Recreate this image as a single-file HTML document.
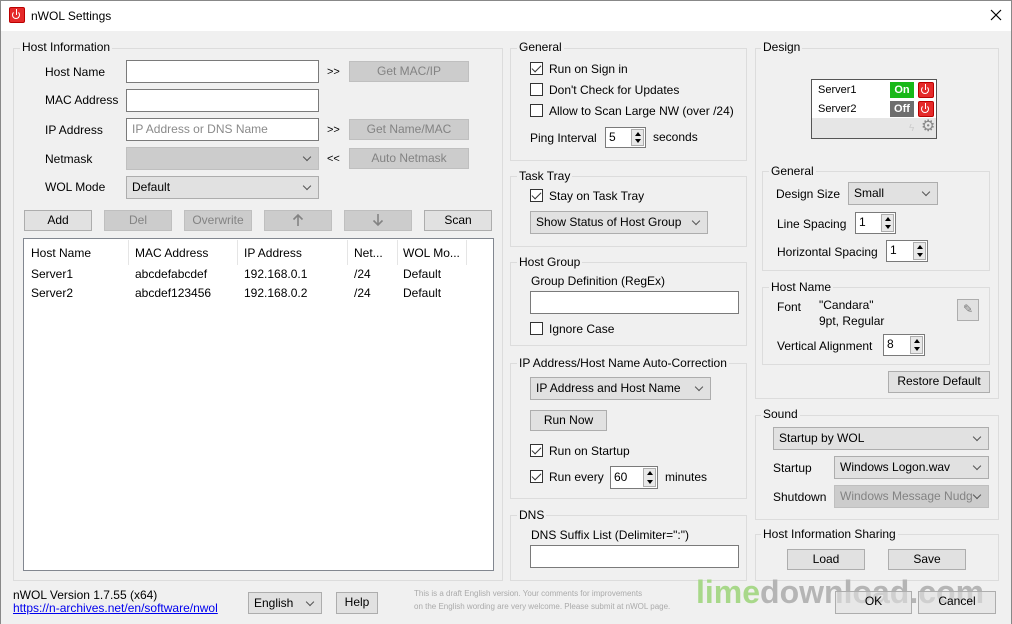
<!DOCTYPE html>
<html><head><meta charset="utf-8"><style>
*{box-sizing:border-box;margin:0;padding:0}
body{width:1012px;height:624px;background:#f0f0f0;font-family:"Liberation Sans",sans-serif;font-size:12px;color:#000;position:relative;overflow:hidden}
.a{position:absolute;white-space:nowrap}
.t{position:absolute;white-space:nowrap;line-height:14px}
.gb{position:absolute;border:1px solid #dcdcdc}
.gl{position:absolute;background:#f0f0f0;padding:0 2px;line-height:14px;white-space:nowrap}
.in{position:absolute;background:#fff;border:1px solid #7a7a7a;padding-left:5px;line-height:20px}
.btn{position:absolute;background:#e1e1e1;border:1px solid #adadad;text-align:center;line-height:18px}
.dis{background:#cccccc;border-color:#bfbfbf;color:#838383}
.cb{position:absolute;background:#e1e1e1;border:1px solid #adadad;padding-left:5px;line-height:20px}
.cb:after{content:"";position:absolute;right:8px;top:6px;width:5px;height:5px;border-right:1px solid #555;border-bottom:1px solid #555;transform:rotate(45deg)}
.cb.dd{background:#cccccc;border-color:#bfbfbf;color:#838383}
.chk{position:absolute;width:13px;height:13px;border:1px solid #333;background:#fff}
.chk.on:after{content:"";position:absolute;left:3px;top:0px;width:4px;height:8px;border-right:1px solid #333;border-bottom:1px solid #333;transform:rotate(45deg)}
.sp{position:absolute;background:#fff;border:1px solid #7a7a7a;padding-left:3px;line-height:18px}
.sp i{position:absolute;right:1px;top:1px;bottom:1px;width:13px;background:#e8e8e8;border:1px solid #adadad}
.sp i:before{content:"";position:absolute;left:3px;top:2px;border:3px solid transparent;border-bottom:4px solid #000;border-top:0}
.sp i:after{content:"";position:absolute;left:3px;bottom:2px;border:3px solid transparent;border-top:4px solid #000;border-bottom:0}
.pw{position:absolute;width:14px;height:14px;background:#e52a2a;border:1px solid #b00;border-radius:2px}
.pw:before{content:"";position:absolute;left:2px;top:3px;width:6px;height:6px;border:1.5px solid #fff;border-top-color:transparent;border-radius:50%}
.pw:after{content:"";position:absolute;left:5.5px;top:1px;width:1.5px;height:6px;background:#fff}
</style></head><body>
<!-- title bar -->
<div class="a" style="left:0;top:0;width:1012px;height:31px;background:#fff;border:1px solid #888;border-bottom:none"></div>
<div class="pw" style="left:9px;top:7px;width:16px;height:16px"></div>
<div class="t" style="left:31px;top:9px;font-size:12px">nWOL Settings</div>
<svg class="a" style="left:990px;top:9px" width="12" height="12"><path d="M1 1L11 11M11 1L1 11" stroke="#000" stroke-width="1.2"/></svg>
<div class="a" style="left:0;top:31px;width:1px;height:593px;background:#888"></div>
<div class="a" style="left:1011px;top:31px;width:1px;height:593px;background:#888"></div>

<!-- Host Information -->
<div class="gb" style="left:13px;top:48px;width:490px;height:533px"></div>
<div class="gl" style="left:20px;top:40px">Host Information</div>
<div class="t" style="left:45px;top:65px">Host Name</div>
<div class="t" style="left:45px;top:93px">MAC Address</div>
<div class="t" style="left:45px;top:123px">IP Address</div>
<div class="t" style="left:45px;top:152px">Netmask</div>
<div class="t" style="left:45px;top:180px">WOL Mode</div>
<div class="in" style="left:126px;top:60px;width:193px;height:23px"></div>
<div class="in" style="left:126px;top:89px;width:193px;height:23px"></div>
<div class="in" style="left:126px;top:118px;width:193px;height:23px;color:#8a8a8a">IP Address or DNS Name</div>
<div class="cb dd" style="left:126px;top:147px;width:193px;height:23px"></div>
<div class="cb" style="left:126px;top:176px;width:193px;height:23px">Default</div>
<div class="t" style="left:327px;top:65px;font-size:11px">&gt;&gt;</div>
<div class="t" style="left:327px;top:123px;font-size:11px">&gt;&gt;</div>
<div class="t" style="left:327px;top:152px;font-size:11px">&lt;&lt;</div>
<div class="btn dis" style="left:349px;top:61px;width:120px;height:21px">Get MAC/IP</div>
<div class="btn dis" style="left:349px;top:119px;width:120px;height:21px">Get Name/MAC</div>
<div class="btn dis" style="left:349px;top:148px;width:120px;height:21px">Auto Netmask</div>
<div class="btn" style="left:24px;top:210px;width:68px;height:21px">Add</div>
<div class="btn dis" style="left:104px;top:210px;width:68px;height:21px">Del</div>
<div class="btn dis" style="left:184px;top:210px;width:68px;height:21px">Overwrite</div>
<div class="btn dis" style="left:264px;top:210px;width:68px;height:21px"><svg width="12" height="14" style="margin-top:2px"><path d="M6 13V2M1.5 6.5L6 2L10.5 6.5" stroke="#838383" stroke-width="1.6" fill="none"/></svg></div>
<div class="btn dis" style="left:344px;top:210px;width:68px;height:21px"><svg width="12" height="14" style="margin-top:2px"><path d="M6 1V12M1.5 7.5L6 12L10.5 7.5" stroke="#838383" stroke-width="1.6" fill="none"/></svg></div>
<div class="btn" style="left:424px;top:210px;width:68px;height:21px">Scan</div>
<div class="a" style="left:23px;top:238px;width:471px;height:333px;background:#fff;border:1px solid #828790"></div>
<div class="a" style="left:128px;top:240px;width:1px;height:25px;background:#e5e5e5"></div>
<div class="a" style="left:237px;top:240px;width:1px;height:25px;background:#e5e5e5"></div>
<div class="a" style="left:347px;top:240px;width:1px;height:25px;background:#e5e5e5"></div>
<div class="a" style="left:397px;top:240px;width:1px;height:25px;background:#e5e5e5"></div>
<div class="a" style="left:466px;top:240px;width:1px;height:25px;background:#e5e5e5"></div>
<div class="t" style="left:31px;top:246px">Host Name</div>
<div class="t" style="left:135px;top:246px">MAC Address</div>
<div class="t" style="left:244px;top:246px">IP Address</div>
<div class="t" style="left:354px;top:246px">Net...</div>
<div class="t" style="left:403px;top:246px">WOL Mo...</div>
<div class="t" style="left:31px;top:267px">Server1</div>
<div class="t" style="left:135px;top:267px">abcdefabcdef</div>
<div class="t" style="left:244px;top:267px">192.168.0.1</div>
<div class="t" style="left:354px;top:267px">/24</div>
<div class="t" style="left:403px;top:267px">Default</div>
<div class="t" style="left:31px;top:286px">Server2</div>
<div class="t" style="left:135px;top:286px">abcdef123456</div>
<div class="t" style="left:244px;top:286px">192.168.0.2</div>
<div class="t" style="left:354px;top:286px">/24</div>
<div class="t" style="left:403px;top:286px">Default</div>

<!-- General -->
<div class="gb" style="left:510px;top:48px;width:237px;height:113px"></div>
<div class="gl" style="left:517px;top:40px">General</div>
<div class="chk on" style="left:530px;top:62px"></div><div class="t" style="left:549px;top:62px">Run on Sign in</div>
<div class="chk" style="left:530px;top:83px"></div><div class="t" style="left:549px;top:83px">Don't Check for Updates</div>
<div class="chk" style="left:530px;top:104px"></div><div class="t" style="left:549px;top:104px">Allow to Scan Large NW (over /24)</div>
<div class="t" style="left:530px;top:131px">Ping Interval</div>
<div class="sp" style="left:605px;top:127px;width:41px;height:21px">5<i></i></div>
<div class="t" style="left:653px;top:130px">seconds</div>

<!-- Task Tray -->
<div class="gb" style="left:510px;top:176px;width:237px;height:71px"></div>
<div class="gl" style="left:517px;top:169px">Task Tray</div>
<div class="chk on" style="left:530px;top:189px"></div><div class="t" style="left:549px;top:189px">Stay on Task Tray</div>
<div class="cb" style="left:530px;top:211px;width:178px;height:23px">Show Status of Host Group</div>

<!-- Host Group -->
<div class="gb" style="left:510px;top:262px;width:237px;height:84px"></div>
<div class="gl" style="left:517px;top:255px">Host Group</div>
<div class="t" style="left:531px;top:274px">Group Definition (RegEx)</div>
<div class="in" style="left:530px;top:291px;width:209px;height:23px"></div>
<div class="chk" style="left:530px;top:322px"></div><div class="t" style="left:549px;top:322px">Ignore Case</div>

<!-- IP auto -->
<div class="gb" style="left:510px;top:363px;width:237px;height:136px"></div>
<div class="gl" style="left:517px;top:356px">IP Address/Host Name Auto-Correction</div>
<div class="cb" style="left:530px;top:377px;width:181px;height:23px">IP Address and Host Name</div>
<div class="btn" style="left:530px;top:410px;width:77px;height:21px">Run Now</div>
<div class="chk on" style="left:530px;top:444px"></div><div class="t" style="left:549px;top:444px">Run on Startup</div>
<div class="chk on" style="left:530px;top:470px"></div><div class="t" style="left:549px;top:470px">Run every</div>
<div class="sp" style="left:610px;top:466px;width:48px;height:23px;line-height:20px">60<i></i></div>
<div class="t" style="left:665px;top:470px">minutes</div>

<!-- DNS -->
<div class="gb" style="left:510px;top:515px;width:237px;height:66px"></div>
<div class="gl" style="left:517px;top:508px">DNS</div>
<div class="t" style="left:531px;top:528px">DNS Suffix List (Delimiter=":")</div>
<div class="in" style="left:530px;top:545px;width:209px;height:23px"></div>

<!-- Design -->
<div class="gb" style="left:755px;top:48px;width:244px;height:351px"></div>
<div class="gl" style="left:761px;top:40px">Design</div>
<div class="a" style="left:811px;top:79px;width:126px;height:60px;background:#fff;border:1px solid #555"></div>
<div class="a" style="left:812px;top:118px;width:124px;height:20px;background:#e6e6e6"></div>
<div class="t" style="left:818px;top:83px;font-size:11px">Server1</div>
<div class="t" style="left:818px;top:102px;font-size:11px">Server2</div>
<div class="a" style="left:890px;top:82px;width:24px;height:16px;background:#18b818;color:#fff;font-weight:bold;font-size:11px;text-align:center;line-height:16px">On</div>
<div class="a" style="left:890px;top:101px;width:24px;height:16px;background:#6e6e6e;color:#fff;font-weight:bold;font-size:11px;text-align:center;line-height:16px">Off</div>
<div class="pw" style="left:918px;top:82px;width:16px;height:16px"></div>
<div class="pw" style="left:918px;top:101px;width:16px;height:16px"></div>
<div class="t" style="left:909px;top:122px;color:#ccc;font-size:10px">ϟ</div>
<div class="t" style="left:921px;top:119px;color:#888;font-size:16px;line-height:16px">⚙</div>

<div class="gb" style="left:762px;top:171px;width:228px;height:100px"></div>
<div class="gl" style="left:769px;top:164px">General</div>
<div class="t" style="left:776px;top:187px">Design Size</div>
<div class="cb" style="left:848px;top:182px;width:90px;height:23px">Small</div>
<div class="t" style="left:777px;top:217px">Line Spacing</div>
<div class="sp" style="left:855px;top:212px;width:41px;height:22px">1<i></i></div>
<div class="t" style="left:777px;top:245px">Horizontal Spacing</div>
<div class="sp" style="left:886px;top:240px;width:42px;height:22px">1<i></i></div>

<div class="gb" style="left:762px;top:287px;width:228px;height:78px"></div>
<div class="gl" style="left:769px;top:280px">Host Name</div>
<div class="t" style="left:777px;top:300px">Font</div>
<div class="t" style="left:819px;top:298px">"Candara"</div>
<div class="t" style="left:819px;top:314px">9pt, Regular</div>
<div class="btn" style="left:957px;top:299px;width:22px;height:22px;color:#777">✎</div>
<div class="t" style="left:777px;top:339px">Vertical Alignment</div>
<div class="sp" style="left:883px;top:334px;width:42px;height:22px">8<i></i></div>
<div class="btn" style="left:888px;top:371px;width:102px;height:22px">Restore Default</div>

<!-- Sound -->
<div class="gb" style="left:755px;top:415px;width:244px;height:105px"></div>
<div class="gl" style="left:761px;top:407px">Sound</div>
<div class="cb" style="left:773px;top:427px;width:216px;height:23px">Startup by WOL</div>
<div class="t" style="left:773px;top:461px">Startup</div>
<div class="cb" style="left:834px;top:456px;width:155px;height:23px">Windows Logon.wav</div>
<div class="t" style="left:773px;top:490px">Shutdown</div>
<div class="cb dd" style="left:834px;top:485px;width:155px;height:23px;overflow:hidden">Windows Message Nudg</div>

<!-- Sharing -->
<div class="gb" style="left:755px;top:534px;width:244px;height:47px"></div>
<div class="gl" style="left:761px;top:527px">Host Information Sharing</div>
<div class="btn" style="left:787px;top:549px;width:78px;height:21px">Load</div>
<div class="btn" style="left:888px;top:549px;width:78px;height:21px">Save</div>

<!-- bottom -->
<div class="t" style="left:13px;top:588px">nWOL Version 1.7.55 (x64)</div>
<div class="t" style="left:13px;top:601px;color:#0000ee;text-decoration:underline">https://n-archives.net/en/software/nwol</div>
<div class="cb" style="left:248px;top:592px;width:74px;height:22px">English</div>
<div class="btn" style="left:336px;top:592px;width:42px;height:22px">Help</div>
<div class="t" style="left:414px;top:588px;font-size:8px;color:#aaa;line-height:12px">This is a draft English version. Your comments for improvements</div>
<div class="t" style="left:414px;top:601px;font-size:8px;color:#aaa;line-height:12px">on the English wording are very welcome. Please submit at nWOL page.</div>
<div class="t" style="left:696px;top:572px;font-size:32px;line-height:40px;font-weight:bold"><span style="color:#a8d88a">lime</span><span style="color:#b5b5b5">download.com</span></div>
<div class="btn" style="left:835px;top:591px;width:77px;height:23px;background:rgba(225,225,225,.6)">OK</div>
<div class="btn" style="left:918px;top:591px;width:78px;height:23px;background:rgba(225,225,225,.6)">Cancel</div>
</body></html>
